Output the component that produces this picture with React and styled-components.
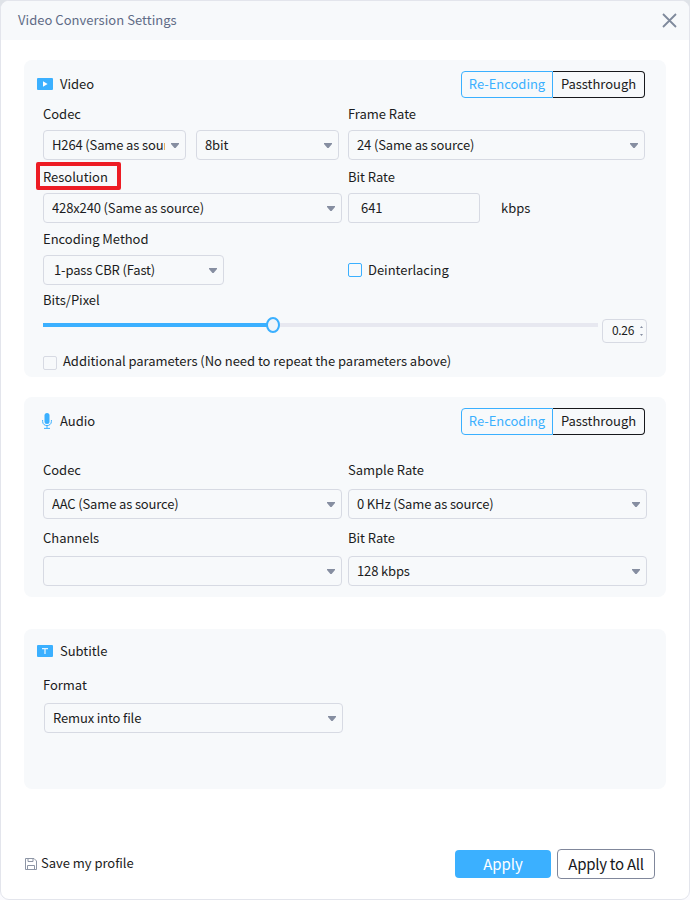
import React, { useState } from 'react';
import styled, { createGlobalStyle } from 'styled-components';

const GlobalStyle = createGlobalStyle`
    *{
        box-sizing: border-box;
    }
    body{
        margin: 0;
        background: linear-gradient(#dfe3e8, #fbfbfe);
    }
    button, input{
        font: inherit;
        letter-spacing: inherit;
        color: inherit;
    }
`

const Dialog = styled.div`
    width: 690px;
    height: 900px;
    border: 1px solid #e3e5ec;
    border-radius: 9px;
    overflow: hidden;
    background-color: #ffffff;
    color: #1b1c21;
    font-family: 'Noto Sans CJK SC', 'Noto Sans', sans-serif;
    font-size: 13px;
    line-height: 20px;
    letter-spacing: -0.03px;
    white-space: nowrap;
`

const TitleBar = styled.div`
    display: flex;
    align-items: center;
    justify-content: space-between;
    height: 39px;
    padding: 0 12px 0 17px;
    background-color: #f7f9fb;
    color: #606b86;
`

const DialogTitle = styled.span`
    padding-bottom: 2px;
    letter-spacing: 0.04px;
`

const Panel = styled.section`
    width: 642px;
    height: ${props => props.$height}px;
    margin: ${props => props.$top}px 0 0 23px;
    padding: 0 0 0 19px;
    border-radius: 8px;
    background-color: #f7f9fb;
`

const PanelHead = styled.div`
    display: flex;
    align-items: center;
    height: ${props => props.$height}px;
    padding-right: 21px;
    margin-left: -6px;
`

const PanelTitle = styled.span`
    flex: 1;
    margin-left: 7px;
`

const Segments = styled.div`
    display: flex;
`

const Segment = styled.button`
    width: 92px;
    height: 27px;
    padding: 0 0 2px;
    line-height: 23px;
    background-color: transparent;
    border: 1px solid ${props => props.$active ? '#3bb0ff' : '#17181c'};
    color: ${props => props.$active ? '#3bb0ff' : '#1b1c21'};

    &:first-child{
        border-radius: 4px 0 0 4px;
    }
    &:last-child{
        border-left: none;
        border-radius: 0 4px 4px 0;
    }
`

const Row = styled.div`
    display: flex;
    gap: ${props => props.$gap || 6}px;
    margin-top: ${props => props.$top || 0}px;
`

const Field = styled.div`
    display: flex;
    flex-direction: column;
    gap: ${props => props.$gap || 6}px;
    width: ${props => props.$width}px;
`

const Label = styled.div`
    position: relative;
    height: 20px;
`

const Marker = styled.div`
    position: absolute;
    left: -7px;
    top: -5px;
    width: 85px;
    height: 28px;
    border: 4px solid #ed1c24;
    border-radius: 2px;
`

const Controls = styled.div`
    display: flex;
    align-items: center;
    gap: ${props => props.$gap || 0}px;
    height: 30px;
`

const SelectBox = styled.div`
    display: flex;
    align-items: center;
    flex: none;
    width: ${props => props.$width}px;
    height: 30px;
    margin-left: ${props => props.$shift || 0}px;
    padding: 0 6px 0 ${props => props.$indent || 8}px;
    border: 1px solid #d7dae3;
    border-radius: 4px;
    letter-spacing: -0.14px;

    span{
        flex: 1;
        overflow: hidden;
        margin-right: 6px;
    }
`

const TextInput = styled.input`
    width: 132px;
    height: 30px;
    padding: 0 12px 1px;
    border: 1px solid #d7dae3;
    border-radius: 3px;
    background-color: transparent;
`

const Unit = styled.span`
    margin-left: 21px;
`

const CheckLine = styled.label`
    display: flex;
    align-items: center;
    gap: 6px;
    margin-top: ${props => props.$top || 0}px;
`

const Check = styled.span`
    width: 14px;
    height: 14px;
    margin-top: ${props => props.$drop || 0}px;
    border: 1px solid ${props => props.$accent ? '#3bb0ff' : '#d7dae3'};
    border-radius: 2px;
`

const SliderRow = styled.div`
    display: flex;
    gap: 4px;
    height: 36px;
`

const Track = styled.div`
    position: relative;
    width: 555px;
    height: 4px;
    margin-top: 13px;
    background-color: #e7e8f0;
`

const TrackFill = styled.div`
    height: 4px;
    background-color: #3bb0ff;
`

const Knob = styled.div`
    position: absolute;
    top: -6px;
    width: 14px;
    height: 16px;
    margin-left: -7px;
    border: 2px solid #3bb0ff;
    border-radius: 50%;
    background-color: #f0f5fa;
`

const Spinner = styled.div`
    display: flex;
    align-items: center;
    justify-content: flex-end;
    gap: 6px;
    width: 45px;
    height: 24px;
    margin-top: 9px;
    padding-right: 3px;
    border: 1px solid #d7dae3;
    border-radius: 4px;
    font-size: 12px;
    letter-spacing: -0.3px;

    span{
        padding-bottom: 2px;
    }
`

const Footer = styled.div`
    display: flex;
    align-items: center;
    height: 30px;
    margin: 60px 34px 0 24px;
`

const SaveLink = styled.div`
    display: flex;
    align-items: center;
    flex: 1;
    gap: 4px;

    span{
        padding-bottom: 2px;
    }
`

const ActionButton = styled.button`
    width: ${props => props.$primary ? 96 : 98}px;
    height: ${props => props.$primary ? 28 : 30}px;
    margin-left: 6px;
    padding: 0 0 1px;
    border: ${props => props.$primary ? 'none' : '1px solid #80879b'};
    border-radius: 4px;
    background-color: ${props => props.$primary ? '#3bb0ff' : '#ffffff'};
    color: ${props => props.$primary ? '#ffffff' : '#17181c'};
    font-size: 15px;
    letter-spacing: ${props => props.$primary ? -0.1 : -0.27}px;
    line-height: 24px;
`

const CloseIcon = () => (
    <svg width='15' height='15' viewBox='0 0 15 15' fill='none' stroke='#7f8a9c' strokeWidth='1.8'>
        <path d='M1 1 L14 14 M14 1 L1 14' />
    </svg>
)

const VideoIcon = () => (
    <svg width='16' height='12' viewBox='0 0 16 12'>
        <rect width='16' height='12' rx='1' fill='#3bb0ff' />
        <path d='M6 3.2 L10.6 6 L6 8.8 Z' fill='#fff' />
    </svg>
)

const MicIcon = () => (
    <svg width='16' height='16' viewBox='0 0 16 16' fill='none' stroke='#3bb0ff'>
        <rect x='7.5' y='0' width='5' height='11' rx='2.5' fill='#3bb0ff' stroke='none' />
        <path d='M5.6 7 V8.4 C5.6 14 14.4 14 14.4 8.4 V7 M10 12.5 V15 M7 15.4 H13' />
    </svg>
)

const SubtitleIcon = () => (
    <svg width='16' height='12' viewBox='0 0 16 12'>
        <rect width='16' height='12' rx='1' fill='#3bb0ff' />
        <path d='M5 3.6 H11 M8 3.6 V9' fill='none' stroke='#e4f4ff' strokeWidth='1.3' />
    </svg>
)

const SaveIcon = () => (
    <svg width='12' height='12' viewBox='0 0 12 12' fill='none' stroke='#8d95a5'>
        <path d='M0.5 0.5 H9 L11.5 3 V11.5 H0.5 Z M3 0.5 V3.5 H8 V0.5 M2.5 11.5 V7.5 H9.5 V11.5' />
    </svg>
)

const Caret = () => (
    <svg width='8' height='5' viewBox='0 0 8 5'>
        <path d='M0 0 H8 V1 L4.6 5 H3.4 L0 1 Z' fill='#868ea1' />
    </svg>
)

const StepArrows = () => (
    <svg width='3' height='10' viewBox='0 0 3 10' fill='#868ea1'>
        <path d='M0 2 L1.5 0 L3 2 Z M0 8 L1.5 10 L3 8 Z' />
    </svg>
)

const Select = ({ value, width, indent, shift }) => (
    <SelectBox $width={width} $indent={indent} $shift={shift}>
        <span>{value}</span>
        <Caret />
    </SelectBox>
)

const ModeSwitch = () => {
    const [mode, setMode] = useState('Re-Encoding');

    return (
        <Segments>
            {['Re-Encoding', 'Passthrough'].map(item => (
                <Segment key={item} $active={item === mode} onClick={() => setMode(item)}>{item}</Segment>
            ))}
        </Segments>
    )
}

const App = () => {
    const [bitRate, setBitRate] = useState('641');
    const position = 230;

    return (
        <>
            <GlobalStyle />
            <Dialog>
                <TitleBar>
                    <DialogTitle>Video Conversion Settings</DialogTitle>
                    <CloseIcon />
                </TitleBar>

                <Panel $height={317} $top={20}>
                    <PanelHead $height={48}>
                        <VideoIcon />
                        <PanelTitle>Video</PanelTitle>
                        <ModeSwitch />
                    </PanelHead>
                    <Row $top={-4}>
                        <Field $width={299}>
                            <Label>Codec</Label>
                            <Controls $gap={10}>
                                <Select value='H264 (Same as source)' width={143} />
                                <Select value='8bit' width={143} />
                            </Controls>
                        </Field>
                        <Field $width={297}>
                            <Label>Frame Rate</Label>
                            <Select value='24 (Same as source)' width={297} />
                        </Field>
                    </Row>
                    <Row $top={7}>
                        <Field $width={299}>
                            <Label>Resolution<Marker /></Label>
                            <Select value='428x240 (Same as source)' width={299} />
                        </Field>
                        <Field $width={297}>
                            <Label>Bit Rate</Label>
                            <Controls>
                                <TextInput value={bitRate} onChange={(e) => setBitRate(e.target.value)} />
                                <Unit>kbps</Unit>
                            </Controls>
                        </Field>
                    </Row>
                    <Row $top={6}>
                        <Field $width={299}>
                            <Label>Encoding Method</Label>
                            <Select value='1-pass CBR (Fast)' width={181} indent={10} />
                        </Field>
                        <CheckLine $top={26}>
                            <Check $accent />
                            Deinterlacing
                        </CheckLine>
                    </Row>
                    <Row $top={5}>
                        <Label>Bits/Pixel</Label>
                    </Row>
                    <SliderRow>
                        <Track>
                            <TrackFill style={{ width: position }} />
                            <Knob style={{ left: position }} />
                        </Track>
                        <Spinner>
                            <span>0.26</span>
                            <StepArrows />
                        </Spinner>
                    </SliderRow>
                    <CheckLine $top={5}>
                        <Check $drop={3} />
                        Additional parameters (No need to repeat the parameters above)
                    </CheckLine>
                </Panel>

                <Panel $height={200} $top={20}>
                    <PanelHead $height={48}>
                        <MicIcon />
                        <PanelTitle>Audio</PanelTitle>
                        <ModeSwitch />
                    </PanelHead>
                    <Row $top={15}>
                        <Field $gap={9}>
                            <Label>Codec</Label>
                            <Select value='AAC (Same as source)' width={299} />
                        </Field>
                        <Field $gap={9}>
                            <Label>Sample Rate</Label>
                            <Select value='0 KHz (Same as source)' width={299} />
                        </Field>
                    </Row>
                    <Row $top={9}>
                        <Field $gap={8}>
                            <Label>Channels</Label>
                            <Select value='' width={299} />
                        </Field>
                        <Field $gap={8}>
                            <Label>Bit Rate</Label>
                            <Select value='128 kbps' width={299} />
                        </Field>
                    </Row>
                </Panel>

                <Panel $height={160} $top={32}>
                    <PanelHead $height={44}>
                        <SubtitleIcon />
                        <PanelTitle>Subtitle</PanelTitle>
                    </PanelHead>
                    <Row $top={2}>
                        <Field $gap={8}>
                            <Label>Format</Label>
                            <Select value='Remux into file' width={299} shift={1} />
                        </Field>
                    </Row>
                </Panel>

                <Footer>
                    <SaveLink>
                        <SaveIcon />
                        <span>Save my profile</span>
                    </SaveLink>
                    <ActionButton $primary>Apply</ActionButton>
                    <ActionButton>Apply to All</ActionButton>
                </Footer>
            </Dialog>
        </>
    )
}

export default App;
